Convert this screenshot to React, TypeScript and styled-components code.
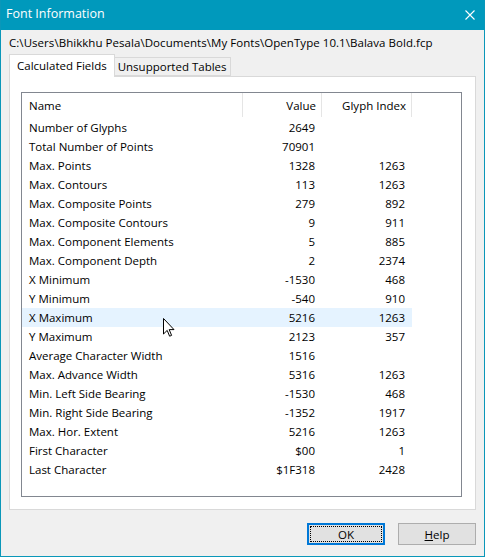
import React from "react";
import styled, { createGlobalStyle } from "styled-components";

const GlobalStyle = createGlobalStyle`
  html, body {
    margin: 0;
    padding: 0;
    background: #ffffff;
  }
  * {
    box-sizing: border-box;
  }
`;

interface FieldRow {
  name: string;
  value: string;
  glyph: string;
  selected?: boolean;
}

const rows: FieldRow[] = [
  { name: "Number of Glyphs", value: "2649", glyph: "" },
  { name: "Total Number of Points", value: "70901", glyph: "" },
  { name: "Max. Points", value: "1328", glyph: "1263" },
  { name: "Max. Contours", value: "113", glyph: "1263" },
  { name: "Max. Composite Points", value: "279", glyph: "892" },
  { name: "Max. Composite Contours", value: "9", glyph: "911" },
  { name: "Max. Component Elements", value: "5", glyph: "885" },
  { name: "Max. Component Depth", value: "2", glyph: "2374" },
  { name: "X Minimum", value: "-1530", glyph: "468" },
  { name: "Y Minimum", value: "-540", glyph: "910" },
  { name: "X Maximum", value: "5216", glyph: "1263", selected: true },
  { name: "Y Maximum", value: "2123", glyph: "357" },
  { name: "Average Character Width", value: "1516", glyph: "" },
  { name: "Max. Advance Width", value: "5316", glyph: "1263" },
  { name: "Min. Left Side Bearing", value: "-1530", glyph: "468" },
  { name: "Min. Right Side Bearing", value: "-1352", glyph: "1917" },
  { name: "Max. Hor. Extent", value: "5216", glyph: "1263" },
  { name: "First Character", value: "$00", glyph: "1" },
  { name: "Last Character", value: "$1F318", glyph: "2428" },
];

export default function App() {
  return (
    <>
      <GlobalStyle />
      <Window>
        <TitleBar>
          <Title>Font Information</Title>
          <CloseButton>
            <svg width="10" height="10" viewBox="0 0 10 10">
              <path d="M0.5 0.5 L9.5 9.5 M9.5 0.5 L0.5 9.5" stroke="#ffffff" strokeWidth="1.1" fill="none" />
            </svg>
          </CloseButton>
        </TitleBar>
        <Body>
          <PathLine>C:\Users\Bhikkhu Pesala\Documents\My Fonts\OpenType 10.1\Balava Bold.fcp</PathLine>
          <TabStrip>
            <Tab $active>Calculated Fields</Tab>
            <Tab>Unsupported Tables</Tab>
          </TabStrip>
          <TabPanel>
            <ListBox>
              <HeaderRow>
                <HeaderCell>Name</HeaderCell>
                <HeaderCell $right>Value</HeaderCell>
                <HeaderCell $right>Glyph Index</HeaderCell>
              </HeaderRow>
              {rows.map((r) => (
                <Row key={r.name} $selected={r.selected}>
                  <Cell>{r.name}</Cell>
                  <Cell $right>{r.value}</Cell>
                  <Cell $right>{r.glyph}</Cell>
                </Row>
              ))}
            </ListBox>
          </TabPanel>
          <Footer>
            <Button $default>
              <FocusRing>OK</FocusRing>
            </Button>
            <Button>
              <span>
                <u>H</u>elp
              </span>
            </Button>
          </Footer>
        </Body>
        <Cursor width="12" height="19" viewBox="0 0 12 19">
          <path
            d="M0.5 0.5 L0.5 16 L4.2 12.4 L6.6 18.2 L8.6 17.4 L6.2 11.6 L11 11.6 Z"
            fill="#ffffff"
            stroke="#000000"
            strokeWidth="1"
            strokeLinejoin="miter"
          />
        </Cursor>
      </Window>
    </>
  );
}

const Window = styled.div`
  position: relative;
  width: 485px;
  height: 557px;
  border: 1px solid #0a97b9;
  border-top: none;
  background: #f0f0f0;
  display: flex;
  flex-direction: column;
  font-family: "Open Sans", "Noto Sans", sans-serif;
  font-size: 11.5px;
  color: #000000;
  overflow: hidden;
`;

const TitleBar = styled.div`
  flex: none;
  height: 30px;
  margin: 0 -1px;
  padding: 0 10px 0 6px;
  background: #0099bc;
  color: #ffffff;
  display: flex;
  align-items: center;
  justify-content: space-between;
`;

const Title = styled.div`
  font-size: 12.5px;
  margin-top: -3px;
`;

const CloseButton = styled.div`
  width: 10px;
  height: 10px;
  display: flex;
  margin-top: -1px;
`;

const Body = styled.div`
  flex: 1;
  display: flex;
  flex-direction: column;
  padding: 0 8px;
`;

const PathLine = styled.div`
  flex: none;
  height: 21px;
  padding-top: 5px;
  line-height: 15px;
  white-space: nowrap;
  letter-spacing: 0.05px;
`;

const TabStrip = styled.div`
  flex: none;
  height: 25px;
  display: flex;
  align-items: flex-end;
  position: relative;
  z-index: 1;
`;

const Tab = styled.div<{ $active?: boolean }>`
  height: ${({ $active }) => ($active ? "23px" : "19px")};
  margin-bottom: ${({ $active }) => ($active ? "-1px" : "0")};
  padding: 0 ${({ $active }) => ($active ? "7px" : "3px")};
  padding-bottom: ${({ $active }) => ($active ? "2px" : "0")};
  border: 1px solid #d9d9d9;
  border-bottom: ${({ $active }) => ($active ? "none" : "1px solid #d9d9d9")};
  border-left: ${({ $active }) => ($active ? "1px solid #d9d9d9" : "none")};
  background: ${({ $active }) => ($active ? "#ffffff" : "#f0f0f0")};
  display: flex;
  align-items: center;
  white-space: nowrap;
`;

const TabPanel = styled.div`
  flex: none;
  height: 434px;
  border: 1px solid #d9d9d9;
  background: #ffffff;
  padding: 15px 13px 12px 11px;
`;

const ListBox = styled.div`
  height: 405px;
  border: 1px solid #828790;
  background: #ffffff;
  display: flex;
  flex-direction: column;
`;

const HeaderRow = styled.div`
  flex: none;
  display: grid;
  grid-template-columns: 221px 79px 90px;
  height: 25px;
  padding-bottom: 1px;
`;

const HeaderCell = styled.div<{ $right?: boolean }>`
  display: flex;
  align-items: center;
  justify-content: ${({ $right }) => ($right ? "flex-end" : "flex-start")};
  padding: ${({ $right }) => ($right ? "0 5px 0 0" : "0 0 0 7px")};
  border-right: 1px solid #e5e5e5;
`;

const Row = styled.div<{ $selected?: boolean }>`
  flex: none;
  display: grid;
  grid-template-columns: 221px 79px 90px;
  width: 390px;
  height: 19px;
  background: ${({ $selected }) => ($selected ? "#e5f3ff" : "transparent")};
`;

const Cell = styled.div<{ $right?: boolean }>`
  display: flex;
  align-items: center;
  justify-content: ${({ $right }) => ($right ? "flex-end" : "flex-start")};
  padding: ${({ $right }) => ($right ? "0 7px 0 0" : "0 0 0 7px")};
  white-space: nowrap;
`;

const Footer = styled.div`
  flex: none;
  display: flex;
  justify-content: flex-end;
  gap: 13px;
  padding-top: 13px;
`;

const Button = styled.div<{ $default?: boolean }>`
  width: 78px;
  height: 22px;
  background: #e1e1e1;
  border: ${({ $default }) => ($default ? "2px solid #0078d7" : "1px solid #adadad")};
  padding: ${({ $default }) => ($default ? "1px" : "0")};
  display: flex;
  align-items: center;
  justify-content: center;
`;

const FocusRing = styled.div`
  flex: 1;
  align-self: stretch;
  border: 1px dotted #000000;
  display: flex;
  align-items: center;
  justify-content: center;
`;

const Cursor = styled.svg`
  position: absolute;
  left: 162px;
  top: 318px;
`;
